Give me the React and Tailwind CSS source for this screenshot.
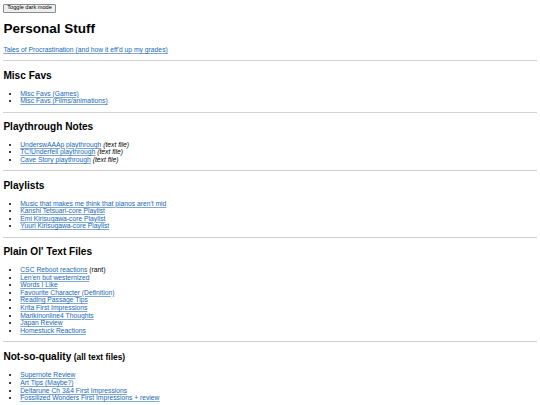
const sections = [
  {
    title: "Misc Favs",
    items: [{ text: "Misc Favs (Games)" }, { text: "Misc Favs (Films/animations)" }],
  },
  {
    title: "Playthrough Notes",
    items: [
      { text: "UnderswAAAp playthrough", note: "(text file)", italic: true },
      { text: "TC!Underfell playthrough", note: "(text file)", italic: true },
      { text: "Cave Story playthrough", note: "(text file)", italic: true },
    ],
  },
  {
    title: "Playlists",
    items: [
      { text: "Music that makes me think that pianos aren't mid" },
      { text: "Kanshi Tetsuari-core Playlist" },
      { text: "Emi Kirisugawa-core Playlist" },
      { text: "Yuuri Kirisugawa-core Playlist" },
    ],
  },
  {
    title: "Plain Ol' Text Files",
    items: [
      { text: "CSC Reboot reactions", note: "(rant)" },
      { text: "Len'en but westernized" },
      { text: "Words I Like" },
      { text: "Favourite Character (Definition)" },
      { text: "Reading Passage Tips" },
      { text: "Krita First Impressions" },
      { text: "Marikinonline4 Thoughts" },
      { text: "Japan Review" },
      { text: "Homestuck Reactions" },
    ],
  },
  {
    title: "Not-so-quality",
    small: "(all text files)",
    items: [
      { text: "Supernote Review" },
      { text: "Art Tips (Maybe?)" },
      { text: "Deltarune Ch 3&4 First Impressions" },
      { text: "Fossilized Wonders First Impressions + review" },
    ],
    last: true,
  },
];

function Link({ children }) {
  return (
    <a href="#" className="text-[#2369b2] underline decoration-[#7fa8d4]">
      {children}
    </a>
  );
}

function Section({ title, small, items, last }) {
  return (
    <>
      <h2 className="my-[8.4px] text-[10.125px] font-bold leading-[11.5px]">
        {title}
        {small && <span className="text-[8.44px]"> {small}</span>}
      </h2>
      <ul className="my-[6.75px] list-disc pl-[16.875px]">
        {items.map((item) => (
          <li key={item.text}>
            <Link>{item.text}</Link>
            {item.note && <span className={item.italic ? "italic" : ""}> {item.note}</span>}
          </li>
        ))}
      </ul>
      {!last && <hr className="my-[3.375px] h-px border-0 bg-[#d2d2d2]" />}
    </>
  );
}

export default function App() {
  return (
    <div className="min-h-screen bg-white p-[3.375px] font-['Liberation_Sans',Arial,sans-serif] text-[6.75px] leading-[7.6px] text-black">
      <div className="h-[9px]">
        <button className="inline-flex h-[9px] items-center rounded-[1px] border border-[#8a8a8a] bg-[#efefef] px-[2.9px] text-[5.625px] leading-none text-black">
          Toggle dark mode
        </button>
      </div>
      <h1 className="my-[9.05px] text-[13.5px] font-bold leading-[15.53px]">Personal Stuff</h1>
      <p className="my-[6.75px]">
        <Link>Tales of Procrastination (and how it eff'd up my grades)</Link>
      </p>
      <hr className="my-[3.375px] h-px border-0 bg-[#d2d2d2]" />
      {sections.map((s) => (
        <Section key={s.title} {...s} />
      ))}
    </div>
  );
}
